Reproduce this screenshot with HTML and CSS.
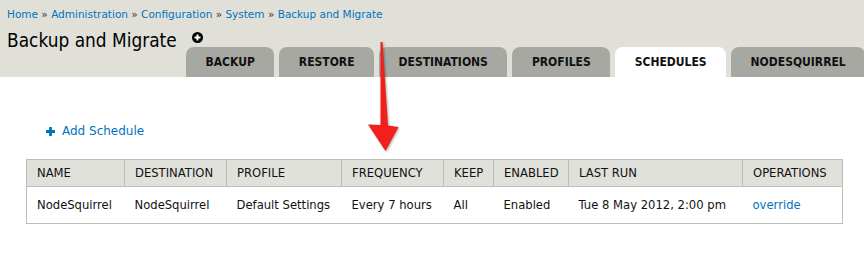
FILE: index.html
```html
<!DOCTYPE html>
<html lang="en">
<head>
<meta charset="utf-8">
<title>Backup and Migrate</title>
<link rel="stylesheet" href="styles.css">
</head>
<body>
<div class="page">
  <header class="branding">
    <nav class="breadcrumb">
      <a href="#">Home</a> » <a href="#">Administration</a> » <a href="#">Configuration</a> » <a href="#">System</a> » <a href="#">Backup and Migrate</a>
    </nav>
    <h1 class="title">Backup and Migrate <span class="shortcut"><svg width="11" height="11" viewBox="0 0 11 11"><circle cx="5.5" cy="5.5" r="5.5" fill="#000"/><path d="M5.5 2.5v6M2.5 5.5h6" stroke="#fff" stroke-width="2"/></svg></span></h1>
    <ul class="tabs">
      <li class="tab"><a href="#">BACKUP</a></li>
      <li class="tab"><a href="#">RESTORE</a></li>
      <li class="tab"><a href="#">DESTINATIONS</a></li>
      <li class="tab"><a href="#">PROFILES</a></li>
      <li class="tab active"><a href="#">SCHEDULES</a></li>
      <li class="tab"><a href="#">NODESQUIRREL</a></li>
    </ul>
  </header>
  <main class="content">
    <div class="action">
      <svg class="add-icon" width="9" height="9" viewBox="0 0 9 9"><path d="M4.5 0v9M0 4.5h9" stroke="#0074bd" stroke-width="2.8"/></svg>
      <a href="#">Add Schedule</a>
    </div>
    <table class="schedules">
      <thead>
        <tr>
          <th class="c-name">NAME</th>
          <th class="c-dest">DESTINATION</th>
          <th class="c-prof">PROFILE</th>
          <th class="c-freq">FREQUENCY</th>
          <th class="c-keep">KEEP</th>
          <th class="c-en">ENABLED</th>
          <th class="c-run">LAST RUN</th>
          <th class="c-ops">OPERATIONS</th>
        </tr>
      </thead>
      <tbody>
        <tr>
          <td>NodeSquirrel</td>
          <td>NodeSquirrel</td>
          <td>Default Settings</td>
          <td>Every 7 hours</td>
          <td>All</td>
          <td>Enabled</td>
          <td>Tue 8 May 2012, 2:00 pm</td>
          <td><a href="#">override</a></td>
        </tr>
      </tbody>
    </table>
  </main>
  <svg class="arrow" width="60" height="130" viewBox="350 30 60 130">
    <polygon points="380.5,42 382.5,42 388,125.5 398.5,127 385.5,151 368,124.5 380.5,125" fill="#f2201c"/>
  </svg>
</div>
</body>
</html>
```
FILE: styles.css
```css
* { box-sizing: border-box; }
html, body { margin: 0; padding: 0; background: #fff; }
body { font-family: "DejaVu Sans", sans-serif; color: #000; }
a { color: #0074bd; text-decoration: none; }
.page { position: relative; width: 864px; height: 274px; overflow: hidden; }

.branding { background: #e0e0d8; height: 77px; padding-top: 6px; }
.breadcrumb { font-size: 10.5px; line-height: 16px; padding-left: 7px; color: #333; }
.title { margin: 6px 0 -5px 7px; font-family: "DejaVu Sans Condensed", "DejaVu Sans", sans-serif; font-weight: normal; font-size: 18.9px; line-height: 24px; color: #000; display: flex; align-items: center; }
.shortcut { display: inline-flex; margin-left: 15px; margin-top: -6px; }

.tabs { list-style: none; margin: 0; padding: 0 0 0 186px; display: flex; gap: 5px; height: 30px; }
.tab { background: #a8a8a2; border-radius: 8px 8px 0 0; height: 30px; display: flex; align-items: center; padding: 0 19.5px; }
.tab a { color: #111; font-family: "DejaVu Sans Condensed", "DejaVu Sans", sans-serif; font-weight: bold; font-size: 12px; }
.tab.active { background: #fff; }

.content { padding: 44px 22px 0 26px; }
.action { display: flex; align-items: center; gap: 7px; padding-left: 20px; height: 20px; font-size: 12px; }
.action a { line-height: 20px; }

.schedules { margin-top: 18px; border-collapse: collapse; width: 816px; table-layout: fixed; font-size: 11.6px; border: 1px solid #bdbdb8; }
.schedules th { background: #e1e1db; font-weight: normal; text-align: left; height: 27px; padding: 0 0 0 10px; border: 1px solid #bdbdb8; color: #111; }
.schedules td { height: 37px; padding: 0 0 0 10px; color: #111; white-space: nowrap; }
.c-name { width: 98px; }
.c-dest { width: 102px; }
.c-prof { width: 115px; }
.c-freq { width: 102px; }
.c-keep { width: 50px; }
.c-en { width: 75px; }
.c-run { width: 174px; }
.c-ops { width: 100px; }

.arrow { position: absolute; left: 350px; top: 30px; filter: drop-shadow(1px 1px 1px rgba(0,0,0,0.35)); }
```
